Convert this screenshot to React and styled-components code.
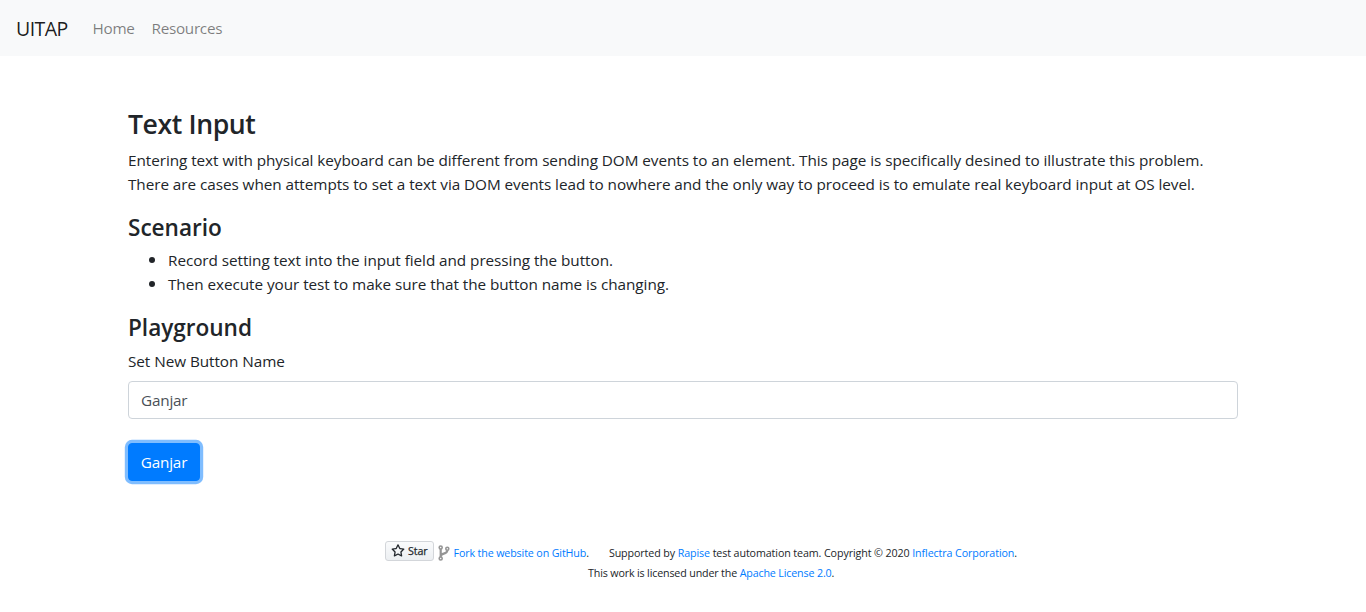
import React from "react";
import styled, { createGlobalStyle } from "styled-components";

const GlobalStyle = createGlobalStyle`
  *, *::before, *::after { box-sizing: border-box; }
  body {
    margin: 0;
    background: #fff;
    color: #212529;
    font-family: "Segoe UI", "Open Sans", "Noto Sans", sans-serif;
    font-size: 15.3px;
    line-height: 24px;
    letter-spacing: -0.056px;
  }
`;

const Navbar = styled.nav`
  display: flex;
  align-items: center;
  height: 56px;
  padding: 0 16px;
  background: #f8f9fa;
`;
const Brand = styled.a`
  margin-right: 24.5px;
  width: 52px;
  padding-top: 2px;
  font-size: 19.5px;
  line-height: 30px;
  letter-spacing: -0.55px;
  color: rgba(0, 0, 0, 0.9);
  white-space: nowrap;
`;
const NavLink = styled.a`
  width: ${(p) => p.$width}px;
  margin-right: 17px;
  letter-spacing: -0.3px;
  color: rgba(0, 0, 0, 0.5);
  white-space: nowrap;
`;
const Container = styled.main`
  width: 1140px;
  margin: 0 auto;
  padding: 52px 15px 0;
`;
const Title = styled.h3`
  margin: 0 0 6.4px;
  font-size: 26.6px;
  line-height: 33.6px;
  font-weight: 600;
  letter-spacing: -0.4px;
`;
const Subtitle = styled.h4`
  margin: 0 0 4.4px;
  font-size: 22.6px;
  line-height: 32px;
  font-weight: 600;
  letter-spacing: -0.03px;
`;
const Paragraph = styled.p`
  margin: 0 0 16px;
`;
const Line = styled.span`
  display: block;
  width: max-content;
  white-space: nowrap;
`;
const List = styled.ul`
  margin: 0 0 16px;
  padding-left: 40px;
`;
const ListItem = styled.li`
  height: 24px;

  &::marker {
    font-size: 18px;
    line-height: 1;
  }
`;
const Label = styled.label`
  display: block;
  width: max-content;
  margin-bottom: 8px;
`;
const Input = styled.input`
  display: block;
  width: 100%;
  height: 38px;
  margin-bottom: 24px;
  padding: 6px 12px;
  border: 1px solid #ced4da;
  border-radius: 4px;
  color: #495057;
  background: #fff;
  font: inherit;
  letter-spacing: -0.2px;
`;
const Button = styled.button`
  display: block;
  width: 72px;
  height: 38px;
  padding: 0;
  border: 1px solid #007bff;
  border-radius: 4px;
  background: #007bff;
  box-shadow: 0 0 0 3.2px rgba(0, 123, 255, 0.5);
  color: #fff;
  font: inherit;
  letter-spacing: -0.2px;
`;
const Footer = styled.footer`
  display: flex;
  flex-direction: column;
  margin-top: 62px;
  font-size: 10.7px;
  line-height: 20px;
  white-space: nowrap;
`;
const FooterRow = styled.div`
  display: flex;
  align-items: center;
  height: 20px;
  padding-left: ${(p) => p.$indent}px;
`;
const StarButton = styled.span`
  display: flex;
  align-items: center;
  gap: 3px;
  width: 49px;
  height: 20px;
  margin: -1px 4px 3px 0;
  padding-left: 5px;
  border: 1px solid #d3d6da;
  border-radius: 3px;
  background: linear-gradient(180deg, #fafbfc, #eceff2);
  color: #24292e;
  font-size: 10.7px;
  line-height: 18px;
  letter-spacing: -0.1px;
  -webkit-text-stroke: 0.25px #24292e;
`;
const Fork = styled.svg`
  margin: 1px 3.5px 0 0;
`;
const FooterText = styled.span`
  margin-right: ${(p) => p.$gap || 0}px;
  letter-spacing: ${(p) => p.$spacing}px;
`;
const Link = styled.a`
  color: #007bff;
`;

export default function App() {
  return (
    <>
      <GlobalStyle />
      <Navbar>
        <Brand>UITAP</Brand>
        <NavLink $width={42}>Home</NavLink>
        <NavLink $width={71}>Resources</NavLink>
      </Navbar>
      <Container>
        <Title><Line>Text Input</Line></Title>
        <Paragraph>
          <Line>Entering text with physical keyboard can be different from sending DOM events to an element. This page is specifically desined to illustrate this problem.</Line>
          <Line>There are cases when attempts to set a text via DOM events lead to nowhere and the only way to proceed is to emulate real keyboard input at OS level.</Line>
        </Paragraph>
        <Subtitle><Line>Scenario</Line></Subtitle>
        <List>
          <ListItem><Line>Record setting text into the input field and pressing the button.</Line></ListItem>
          <ListItem><Line>Then execute your test to make sure that the button name is changing.</Line></ListItem>
        </List>
        <Subtitle><Line>Playground</Line></Subtitle>
        <Label htmlFor="name"><Line>Set New Button Name</Line></Label>
        <Input id="name" defaultValue="Ganjar" />
        <Button type="button">Ganjar</Button>
      </Container>
      <Footer>
        <FooterRow $indent={385}>
          <StarButton>
            <svg width="14" height="14" viewBox="0 0 16 16" fill="currentColor">
              <path fillRule="evenodd" d="M8 .25a.75.75 0 01.673.418l1.882 3.815 4.21.612a.75.75 0 01.416 1.279l-3.046 2.97.719 4.192a.75.75 0 01-1.088.791L8 12.347l-3.766 1.98a.75.75 0 01-1.088-.79l.72-4.194L.818 6.374a.75.75 0 01.416-1.28l4.21-.611L7.327.668A.75.75 0 018 .25zm0 2.445L6.615 5.5a.75.75 0 01-.564.41l-3.097.45 2.24 2.184a.75.75 0 01.216.664l-.528 3.084 2.769-1.456a.75.75 0 01.698 0l2.77 1.456-.53-3.084a.75.75 0 01.216-.664l2.24-2.183-3.096-.45a.75.75 0 01-.564-.41L8 2.694z" />
            </svg>
            Star
          </StarButton>
          <Fork width="12" height="16" viewBox="0 0 12 16" fill="none" stroke="#959595">
            <circle cx="2.7" cy="2.5" r="1.5" strokeWidth="1.6" />
            <circle cx="9.3" cy="3.7" r="1.5" strokeWidth="1.6" />
            <circle cx="2.7" cy="13.5" r="1.5" strokeWidth="1.6" />
            <path d="M2.7 4v8M9.3 5.2c0 4.6-6.2 2.4-6.6 6" strokeWidth="2.2" />
          </Fork>
          <FooterText $gap={20} $spacing={-0.13}><Link>Fork the website on GitHub</Link>.</FooterText>
          <FooterText $spacing={-0.1}>Supported by <Link>Rapise</Link> test automation team. Copyright © 2020 <Link>Inflectra Corporation</Link>.</FooterText>
        </FooterRow>
        <FooterRow $indent={588}>
          <FooterText $spacing={-0.15}>This work is licensed under the <Link>Apache License 2.0</Link>.</FooterText>
        </FooterRow>
      </Footer>
    </>
  );
}
